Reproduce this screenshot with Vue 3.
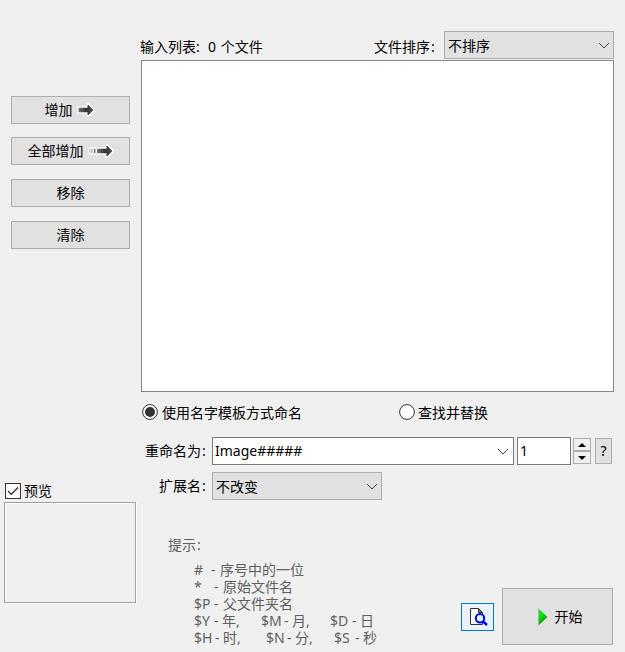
<script setup>
import { ref } from 'vue'

const mode = ref('template')
const pattern = ref('Image#####')
const start = ref('1')

// Each hint row is a run of [text, advance width] tokens.
const hints = [
  [['#', 17], ['-', 9], ['序号中的一位', 84]],
  [['*', 20], ['-', 9], ['原始文件名', 70]],
  [['$P', 20], ['-', 9], ['父文件夹名', 70]],
  [['$Y', 20], ['-', 8], ['年', 14], [',', 25], ['$M', 23], ['-', 8], ['月', 14], [',', 24], ['$D', 22], ['-', 8], ['日', 14]],
  [['$H', 21], ['-', 8], ['时', 14], [',', 29], ['$N', 21], ['-', 8], ['分', 14], [',', 25], ['$S', 21], ['-', 8], ['秒', 14]],
]
</script>

<template>
  <div class="window">
    <aside class="side">
      <div class="actions">
        <button class="btn">
          <span>增加</span>
          <svg class="arrow" width="18" height="14" viewBox="0 0 18 14">
            <defs>
              <linearGradient id="shaft" x1="0" y1="0" x2="1" y2="0">
                <stop offset="0" stop-color="#777" />
                <stop offset=".5" stop-color="#333" />
                <stop offset="1" stop-color="#555" />
              </linearGradient>
            </defs>
            <path d="M1.5 4.5H10V1.5H12L17.3 7L12 12.5H10V9.5H1.5Z" fill="#fff" stroke="#fff" stroke-width="2" />
            <path d="M1.5 4.8H10.5V2L11.5 2L16.5 7L11.5 12H10.5V9.2H1.5Z" fill="url(#shaft)" />
          </svg>
        </button>
        <button class="btn all">
          <span>全部增加</span>
          <svg class="arrow" width="26" height="14" viewBox="0 0 26 14">
            <path d="M1.5 4.5H18V1.5H20L25.3 7L20 12.5H18V9.5H1.5Z" fill="#fff" stroke="#fff" stroke-width="2" />
            <path d="M9 4.8H18.5V2L19.5 2L24.5 7L19.5 12H18.5V9.2H9Z" fill="url(#shaft)" />
            <path d="M2 4.8V9.2" stroke="#aaa" stroke-width="1" />
            <path d="M4 4.8V9.2" stroke="#999" stroke-width="1" />
            <path d="M6.7 4.8V9.2" stroke="#777" stroke-width="1.6" />
          </svg>
        </button>
        <button class="btn gap"><span>移除</span></button>
        <button class="btn gap"><span>清除</span></button>
      </div>
      <div class="preview">
        <label class="check">
          <svg width="16" height="16" viewBox="0 0 16 16">
            <rect x=".5" y=".5" width="15" height="15" fill="#fff" stroke="#333" />
            <path d="M3 8L6.3 11.3L13 4.5" fill="none" stroke="#333" stroke-width="1.3" />
          </svg>
          <span>预览</span>
        </label>
        <div class="pane"></div>
      </div>
    </aside>

    <main class="main">
      <div class="header">
        <span class="count">输入列表<i class="colon">:</i><span class="latin">0</span> 个文件</span>
        <span class="sort">文件排序<i class="colon">:</i></span>
        <div class="select">
          <span>不排序</span>
          <svg width="12" height="7" viewBox="0 0 12 7"><path d="M1 1L6 6L11 1" fill="none" stroke="#444" /></svg>
        </div>
      </div>
      <div class="list"></div>

      <div class="radios">
        <label class="radio" @click="mode = 'template'">
          <svg width="16" height="16" viewBox="0 0 16 16">
            <circle cx="8" cy="8" r="7.4" fill="#fff" stroke="#333" />
            <circle v-if="mode === 'template'" cx="8" cy="8" r="5" fill="#333" />
          </svg>
          <span>使用名字模板方式命名</span>
        </label>
        <label class="radio" @click="mode = 'replace'">
          <svg width="16" height="16" viewBox="0 0 16 16">
            <circle cx="8" cy="8" r="7.4" fill="#fff" stroke="#333" />
            <circle v-if="mode === 'replace'" cx="8" cy="8" r="5" fill="#333" />
          </svg>
          <span>查找并替换</span>
        </label>
      </div>

      <div class="row rename">
        <span class="label">重命名为<i class="colon">:</i></span>
        <div class="combo">
          <span>{{ pattern }}</span>
          <svg width="12" height="7" viewBox="0 0 12 7"><path d="M1 1L6 6L11 1" fill="none" stroke="#444" /></svg>
        </div>
        <div class="number">{{ start }}</div>
        <div class="spin">
          <div class="step"><svg width="8" height="4" viewBox="0 0 8 4"><path d="M0 4L4 0L8 4Z" /></svg></div>
          <div class="step"><svg width="8" height="4" viewBox="0 0 8 4"><path d="M0 0L4 4L8 0Z" /></svg></div>
        </div>
        <button class="help">?</button>
      </div>

      <div class="row ext">
        <span class="label">扩展名<i class="colon">:</i></span>
        <div class="select">
          <span>不改变</span>
          <svg width="12" height="7" viewBox="0 0 12 7"><path d="M1 1L6 6L11 1" fill="none" stroke="#444" /></svg>
        </div>
      </div>

      <div class="footer">
        <div class="hints">
          <div class="title">提示<i class="colon">:</i></div>
          <div v-for="(line, i) in hints" :key="i" class="hint">
            <span v-for="(token, j) in line" :key="j" :style="{ width: token[1] + 'px' }">{{ token[0] }}</span>
          </div>
        </div>
        <button class="find">
          <svg width="20" height="20" viewBox="0 0 20 20">
            <path d="M2.5 1.5H10.5L14.5 5.5V17.5H2.5Z" fill="#f8f8f8" stroke="#333" />
            <path d="M10.5 1.5V5.5H14.5Z" fill="#777" stroke="#333" />
            <circle cx="12" cy="11.3" r="4.2" fill="#e0f4fb" stroke="#00f" stroke-width="2" />
            <path d="M15 14.3L19 18" stroke="#00f" stroke-width="2.4" />
          </svg>
        </button>
        <button class="go">
          <svg width="10" height="18" viewBox="0 0 10 18">
            <defs>
              <linearGradient id="play" x1="0" y1="0" x2="0.5" y2="1">
                <stop offset="0" stop-color="#2bea2b" />
                <stop offset=".5" stop-color="#0cd80c" />
                <stop offset="1" stop-color="#078a07" />
              </linearGradient>
            </defs>
            <path d="M.5 .5L9.5 9L.5 17.5Z" fill="url(#play)" />
            <path d="M.5 .5V17.5" stroke="#8bc58b" />
          </svg>
          <span>开始</span>
        </button>
      </div>
    </main>
  </div>
</template>

<style>
body {
  background: #f0f0f0;
}
</style>

<style scoped>
.window {
  display: flex;
  width: 625px;
  height: 652px;
  overflow: hidden;
  background: #f0f0f0;
  color: #000;
  font: 14px/18px "Noto Sans", "Noto Sans CJK SC", sans-serif;
  white-space: nowrap;
}
.window * {
  box-sizing: border-box;
}
svg {
  display: block;
  flex: none;
}
button {
  margin: 0;
  padding: 0;
  border: 1px solid #adadad;
  background: #e1e1e1;
  color: inherit;
  font: inherit;
}
.colon {
  display: inline-block;
  width: 13px;
  padding-left: 1px;
  font-style: normal;
}
.side {
  display: flex;
  flex-direction: column;
  flex: none;
  justify-content: space-between;
  width: 141px;
  padding: 96px 0 49px;
}
.actions {
  padding-left: 11px;
}
.btn {
  display: flex;
  align-items: center;
  justify-content: center;
  width: 119px;
  height: 28px;
  gap: 4px;
}
.btn:first-child {
  padding-right: 2px;
}
.btn.all {
  margin-top: 13px;
}
.btn.gap {
  margin-top: 14px;
}
.preview {
  padding-left: 4px;
}
.check {
  display: flex;
  align-items: center;
  gap: 3px;
  height: 16px;
  margin: 0 0 3px 1px;
}
.pane {
  width: 132px;
  height: 101px;
  border: 1px solid #a0a0a0;
  box-shadow: inset 1px 1px #fff, 1px 1px #fff;
}
.main {
  flex: none;
  width: 473px;
  padding-top: 31px;
}
.header {
  display: flex;
  align-items: center;
  height: 28px;
  margin-bottom: 1px;
}
.count {
  width: 233px;
  padding-top: 3px;
  text-indent: -1px;
}
.latin {
  display: inline-block;
  width: 8px;
}
.sort {
  width: 70px;
  padding-top: 3px;
}
.select,
.combo {
  display: flex;
  align-items: center;
  justify-content: space-between;
  width: 170px;
  height: 28px;
  padding: 0 3px;
  border: 1px solid #adadad;
  background: #e1e1e1;
}
.header .select {
  padding-top: 2px;
}
.header .select svg {
  margin-bottom: 1px;
}
.list {
  height: 332px;
  border: 1px solid #828790;
  background: #fff;
}
.radios {
  display: flex;
  height: 45px;
  padding: 12px 0 0 1px;
}
.radio {
  display: flex;
  flex: none;
  align-items: center;
  gap: 4px;
  width: 257px;
  height: 16px;
}
.radio:last-child {
  gap: 3px;
  width: 160px;
}
.radio span {
  padding-top: 2px;
}
.row {
  display: flex;
  align-items: center;
  height: 28px;
}
.label {
  width: 71px;
  padding-left: 4px;
}
.combo,
.number {
  height: 28px;
  border-color: #7a7a7a;
  background: #fff;
}
.combo {
  width: 302px;
  padding: 0 4px 0 2px;
}
.number {
  width: 54px;
  margin-left: 3px;
  padding: 4px 2px;
  border: 1px solid #7a7a7a;
}
.spin {
  width: 18px;
  margin-left: 2px;
}
.step {
  display: flex;
  align-items: center;
  justify-content: center;
  height: 13px;
  border: 1px solid #adadad;
}
.help {
  width: 17px;
  height: 26px;
  margin-left: 4px;
}
.ext {
  margin-top: 7px;
}
.ext .label {
  padding-left: 18px;
}
.ext .select {
  padding-top: 1px;
}
.footer {
  display: flex;
  align-items: flex-start;
  height: 152px;
}
.hints {
  width: 320px;
  padding: 36px 0 0 27px;
  color: #606060;
}
.title {
  margin-bottom: 7px;
}
.hint {
  display: flex;
  height: 17px;
  padding-left: 26px;
  line-height: 17px;
}
.hint span {
  flex: none;
}
.find {
  display: flex;
  align-items: center;
  justify-content: center;
  width: 33px;
  height: 28px;
  margin-top: 103px;
  border-color: #0078d7;
  background: #e8f2fa;
}
.go {
  display: flex;
  align-items: center;
  justify-content: center;
  gap: 7px;
  width: 111px;
  height: 57px;
  margin: 88px 0 0 8px;
  padding-left: 5px;
}
</style>
